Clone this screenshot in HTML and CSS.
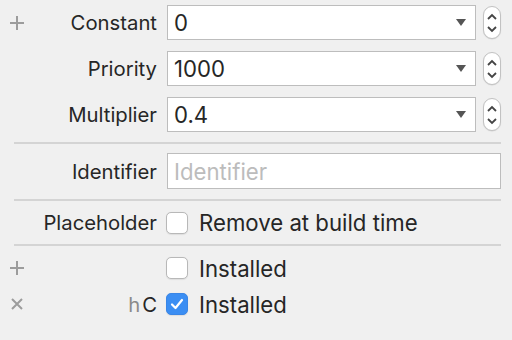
FILE: index.html
```html
<!DOCTYPE html>
<html>
<head>
<meta charset="utf-8">
<link rel="stylesheet" href="styles.css">
</head>
<body>
<div class="panel">
  <div class="row field-row">
    <div class="label"><span class="icon"><svg width="14" height="14" viewBox="0 0 14 14"><path d="M7 0v14M0 7h14" stroke="#9c9c9c" stroke-width="2"/></svg></span><span class="text">Constant</span></div>
    <div class="control">
      <div class="combo"><span class="value">0</span><span class="arrow"></span></div>
      <div class="stepper"><svg width="12" height="26" viewBox="0 0 12 26"><path d="M2 9l4-4 4 4M2 17l4 4 4-4" fill="none" stroke="#444" stroke-width="1.8"/></svg></div>
    </div>
  </div>
  <div class="row field-row">
    <div class="label"><span class="icon"></span><span class="text">Priority</span></div>
    <div class="control">
      <div class="combo"><span class="value">1000</span><span class="arrow"></span></div>
      <div class="stepper"><svg width="12" height="26" viewBox="0 0 12 26"><path d="M2 9l4-4 4 4M2 17l4 4 4-4" fill="none" stroke="#444" stroke-width="1.8"/></svg></div>
    </div>
  </div>
  <div class="row field-row">
    <div class="label"><span class="icon"></span><span class="text">Multiplier</span></div>
    <div class="control">
      <div class="combo"><span class="value">0.4</span><span class="arrow"></span></div>
      <div class="stepper"><svg width="12" height="26" viewBox="0 0 12 26"><path d="M2 9l4-4 4 4M2 17l4 4 4-4" fill="none" stroke="#444" stroke-width="1.8"/></svg></div>
    </div>
  </div>
  <div class="sep first"></div>
  <div class="row ident-row">
    <div class="label"><span class="icon"></span><span class="text">Identifier</span></div>
    <div class="control">
      <div class="textfield"><span class="placeholder">Identifier</span></div>
    </div>
  </div>
  <div class="sep"></div>
  <div class="row check-row placeholder-row">
    <div class="label"><span class="icon"></span><span class="text">Placeholder</span></div>
    <div class="control">
      <span class="checkbox"></span><span class="check-text">Remove at build time</span>
    </div>
  </div>
  <div class="sep"></div>
  <div class="installed">
    <div class="row check-row inst-row">
      <div class="label"><span class="icon"><svg width="14" height="14" viewBox="0 0 14 14"><path d="M7 0v14M0 7h14" stroke="#9c9c9c" stroke-width="2"/></svg></span><span class="text"></span></div>
      <div class="control">
        <span class="checkbox"></span><span class="check-text">Installed</span>
      </div>
    </div>
    <div class="row check-row inst-row">
      <div class="label"><span class="icon"><svg width="14" height="14" viewBox="0 0 14 14"><path d="M2 2l10 10M12 2L2 12" stroke="#9c9c9c" stroke-width="2"/></svg></span><span class="text"><span class="dim">h</span>C</span></div>
      <div class="control">
        <span class="checkbox checked"><svg width="14" height="12" viewBox="0 0 14 12"><path d="M2 6.5l3.5 3.5L12 2" fill="none" stroke="#fff" stroke-width="2.2" stroke-linecap="round" stroke-linejoin="round"/></svg></span><span class="check-text">Installed</span>
      </div>
    </div>
  </div>
</div>
</body>
</html>
```
FILE: styles.css
```css
html, body {
  margin: 0;
  padding: 0;
  background: #f0f0f0;
}
body {
  width: 512px;
  height: 340px;
  overflow: hidden;
  font-family: "Inter", "Liberation Sans", sans-serif;
  font-size: 20.3px;
  color: #262626;
}
.panel {
  padding: 5px 11px 0 0;
}
.row {
  display: grid;
  grid-template-columns: 157px 1fr;
  column-gap: 10px;
  align-items: center;
}
.label {
  display: flex;
  align-items: center;
  justify-content: space-between;
  padding-left: 10px;
}
.icon {
  width: 14px;
  height: 14px;
  display: flex;
}
.text {
  text-align: right;
}
.dim {
  color: #8a8a8a;
  margin-right: 2px;
}
.value,
.placeholder,
.check-text {
  font-size: 22.2px;
}
.field-row {
  height: 35px;
  margin-bottom: 11px;
}
.field-row:nth-child(3) {
  margin-bottom: 0;
}
.control {
  display: flex;
  align-items: center;
  height: 100%;
}
.combo {
  flex: 1;
  height: 35px;
  box-sizing: border-box;
  border: 1px solid #bdbdbd;
  background: #fff;
  display: flex;
  align-items: center;
  justify-content: space-between;
  padding: 0 9px 0 6px;
}
.arrow {
  width: 0;
  height: 0;
  border-left: 5.5px solid transparent;
  border-right: 5.5px solid transparent;
  border-top: 7px solid #555;
}
.stepper {
  width: 18px;
  height: 33px;
  box-sizing: border-box;
  margin-left: 7px;
  border: 1px solid #c2c2c2;
  border-radius: 9px;
  background: #fff;
  display: flex;
  align-items: center;
  justify-content: center;
  box-shadow: 0 0.5px 1px rgba(0,0,0,0.12);
}
.sep {
  height: 2px;
  background: #d4d4d4;
  margin: 10px 0 0 14px;
}
.ident-row {
  height: 36px;
  margin-top: 9px;
}
.textfield {
  flex: 1;
  height: 36px;
  box-sizing: border-box;
  border: 1px solid #bdbdbd;
  background: #fff;
  display: flex;
  align-items: center;
  padding-left: 6px;
}
.placeholder {
  color: #bcbcbc;
}
.placeholder-row {
  height: 43px;
}
.placeholder-row + .sep {
  margin-top: 0;
}
.installed {
  padding-top: 4px;
}
.inst-row {
  height: 36px;
}
.checkbox {
  width: 22px;
  height: 22px;
  box-sizing: border-box;
  border: 1px solid #b8b8b8;
  border-radius: 5px;
  background: #fff;
  margin-left: -1px;
  display: flex;
  align-items: center;
  justify-content: center;
  box-shadow: 0 0.5px 1px rgba(0,0,0,0.08);
}
.checkbox.checked {
  background: #3b8ef3;
  border-color: #3a86e6;
}
.check-text {
  margin-left: 11px;
}
```
